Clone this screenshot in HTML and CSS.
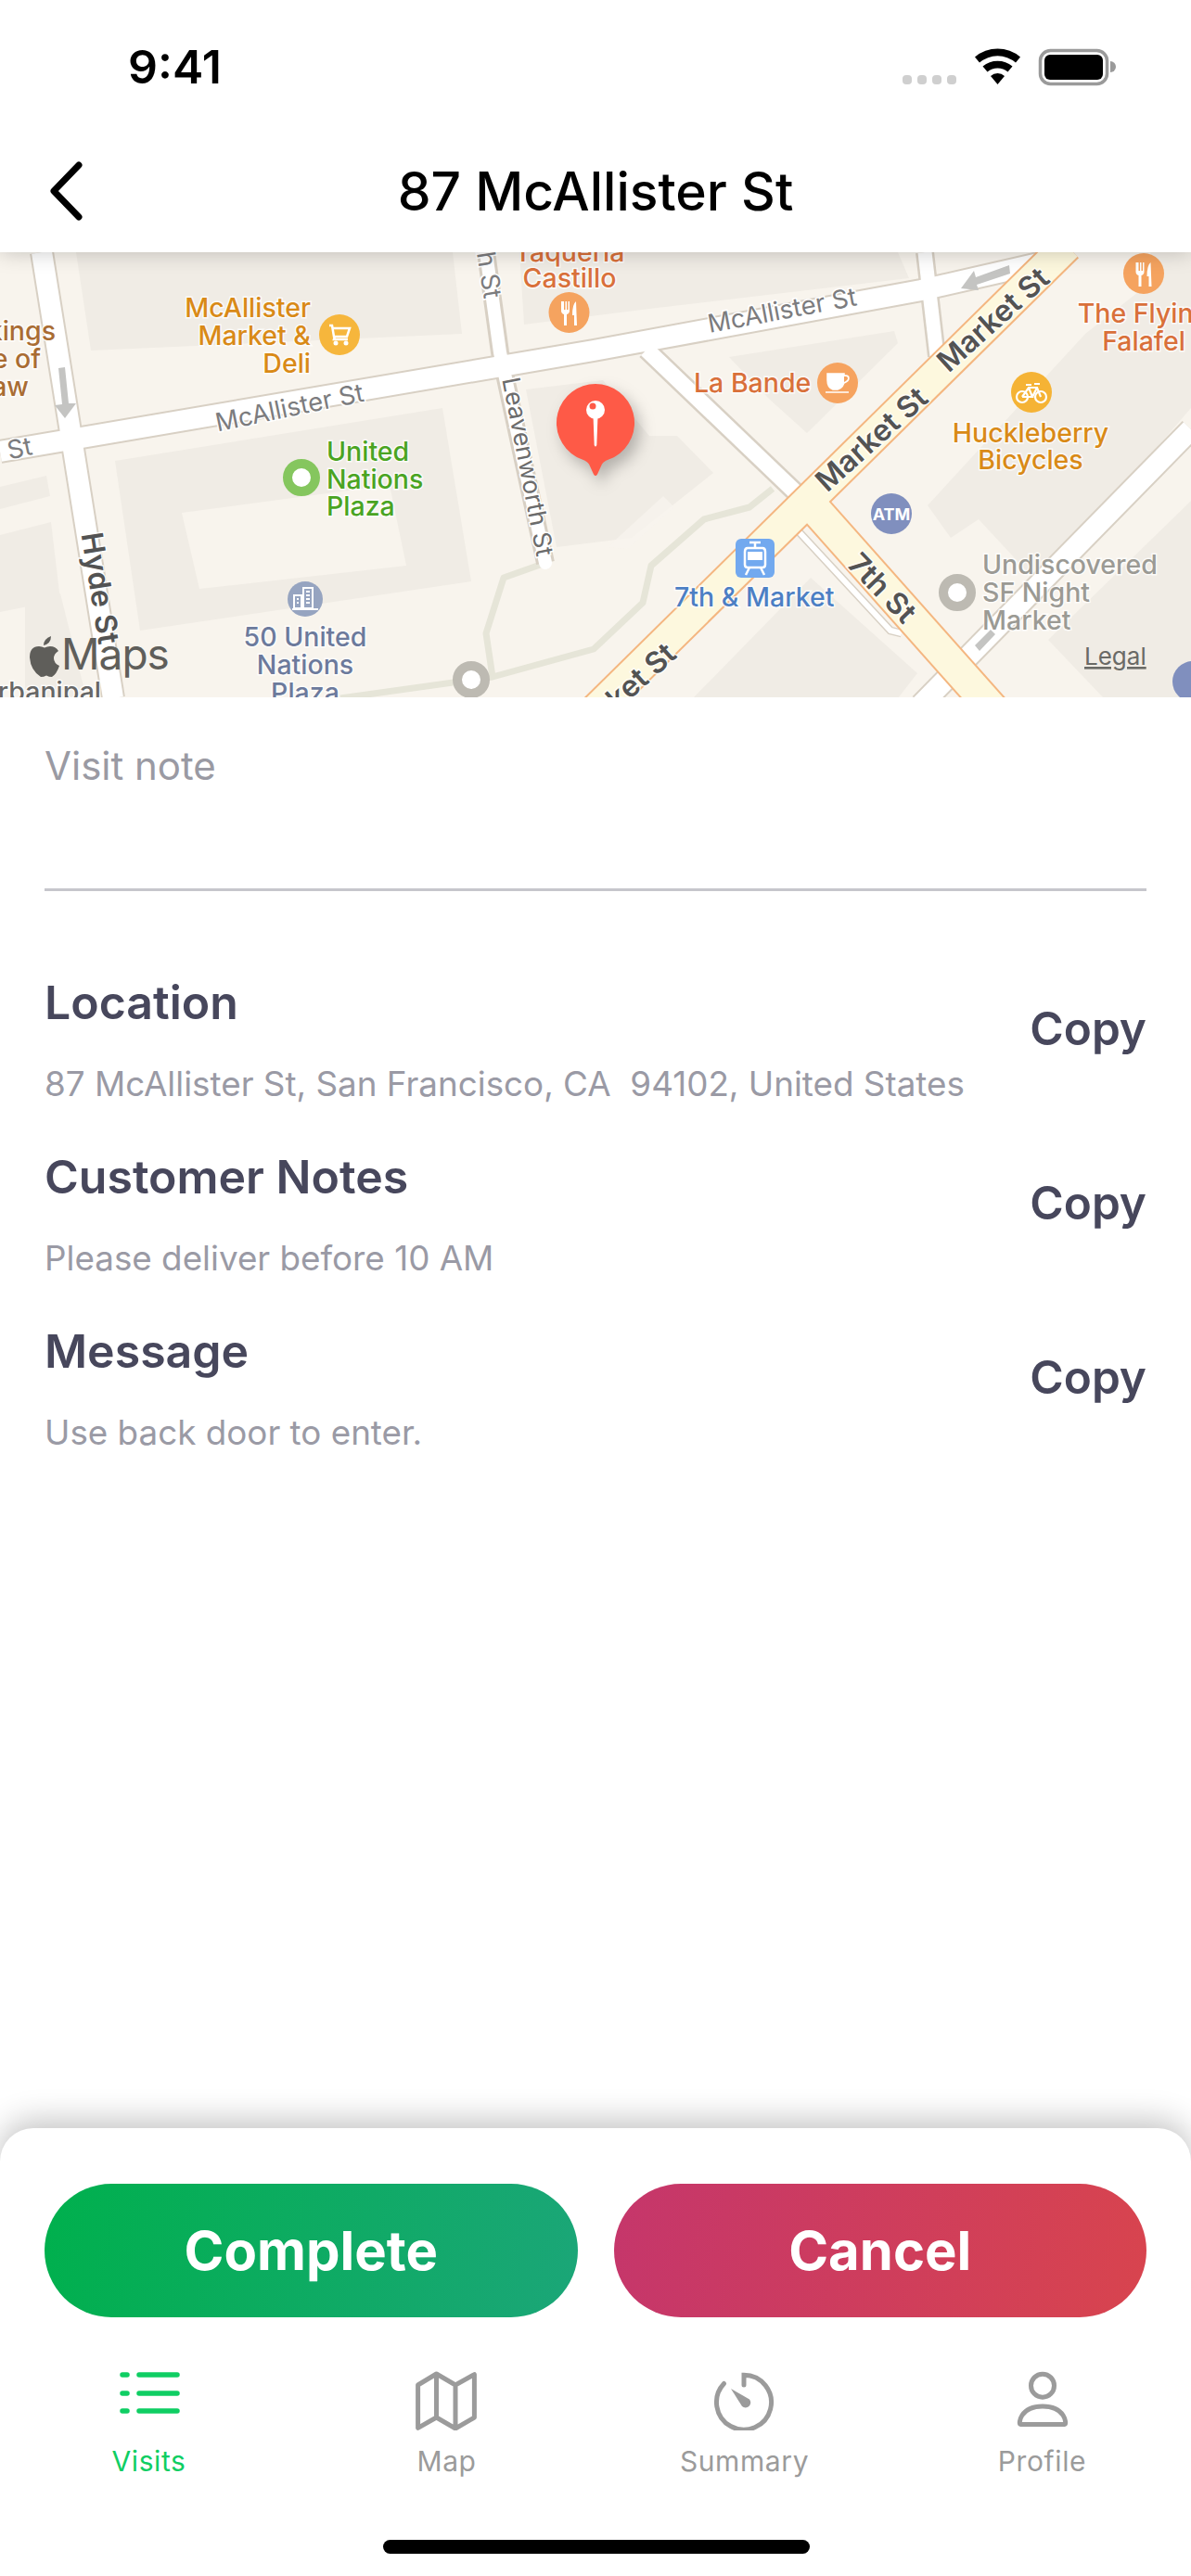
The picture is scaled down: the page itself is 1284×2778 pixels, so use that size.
FILE: index.html
```html
<!DOCTYPE html>
<html lang="en">
<head>
<meta charset="utf-8">
<title>87 McAllister St</title>
<link rel="stylesheet" href="styles.css">
</head>
<body>
<div class="app">
  <header class="top">
    <div class="status">
      <span class="time">9:41</span>
      <svg class="status-icons" width="234" height="44" viewBox="970 50 234 44">
        <g fill="#cfcfcf"><rect x="973" y="81" width="10" height="10" rx="4"/><rect x="989" y="81" width="10" height="10" rx="4"/><rect x="1005" y="81" width="10" height="10" rx="4"/><rect x="1021" y="81" width="10" height="10" rx="4"/></g>
        <g fill="#000"><path d="M1075.5 91l-7.5-9a11 11 0 0 1 15 0z"/><path d="M1064.5 77.500l-5-6a25 25 0 0 1 32 0l-5 6a17 17 0 0 0-22 0z"/><path d="M1056 67.500l-5-6a38 38 0 0 1 49 0l-5 6a30 30 0 0 0-39 0z"/></g>
        <rect x="1121.500" y="54.500" width="72" height="36" rx="11" fill="none" stroke="#9a9a9a" stroke-width="3.500"/>
        <rect x="1126" y="59" width="63" height="27" rx="6" fill="#000"/>
        <path d="M1197 66a6 6 0 0 1 0 12z" fill="#9a9a9a"/>
      </svg>
    </div>
    <div class="nav">
      <svg class="back" width="36" height="64" viewBox="0 0 36 64"><path d="M32 4L5 32l27 28" fill="none" stroke="#000" stroke-width="7" stroke-linecap="round" stroke-linejoin="round"/></svg>
      <h1 class="title">87 McAllister St</h1>
    </div>
  </header>

  <svg class="map" width="1284" height="480" viewBox="0 272 1284 480" xmlns="http://www.w3.org/2000/svg">
    <rect x="0" y="272" width="1284" height="480" fill="#f8f4ed"/>
    <g fill="#f0ece5">
      <path d="M82 272H488l10 88-400 18z"/>
      <path d="M124 497l353-57 31 187-357 53z"/>
      <path d="M0 577l55-14 10 84-65 13zM0 525l50-12 4 22-54 14zM27 640l38 0 30 120H27z"/>
      <path d="M560 272H968l12 28-280 33-135 17z"/>
      <path d="M786 385l178-28 4 13-98 97-41-37z"/>
      <path d="M567 420l83-10 50 60h30l39 40-88 70-81 10z"/>
      <path d="M1000 545L1170 360l114-90v170L1120 630l-65-70-30 20z"/>
      <path d="M1130 690l154-150v213h-94z"/>
      <path d="M747 753l127-130 115 103-21 27z"/>
      <path d="M1240 272h44v40l-30 10z"/>
    </g>
    <path d="M196 553l224-30 18 87-223 25z" fill="#f8f4ed"/>
    <path d="M655 590l60-55 12 12-50 45z" fill="#f8f4ed" opacity=".8"/>

    <g fill="none" stroke="#e6e5d8" stroke-width="7" stroke-linejoin="round">
      <path d="M588 607l-45 16-19 60 7 47M367 753l164-23 109-30 53-50 9-40 57-50 49-13 25-20"/>
    </g>

    <g fill="none" stroke-linecap="butt">
      <g stroke="#d8d0c4" stroke-width="26">
        <path d="M45 272L122 753"/>
        <path d="M0 487L640 378 993 313l140-32"/>
        <path d="M1284 463L993 760"/>
      </g>
      <path d="M524 272L539 380 588 607" stroke="#d8d0c4" stroke-width="20"/>
      <path d="M997 272l13 112" stroke="#d8d0c4" stroke-width="20"/>
      <path d="M697 377L862 535" stroke="#d8d0c4" stroke-width="22"/>
      <g stroke="#ffffff" stroke-width="22">
        <path d="M45 272L122 753"/>
        <path d="M0 487L640 378 993 313l140-32"/>
        <path d="M1284 463L993 760"/>
      </g>
      <path d="M524 272L539 380 588 607" stroke="#fff" stroke-width="14" stroke-linecap="round"/>
      <path d="M997 272l13 112" stroke="#fff" stroke-width="15"/>
      <path d="M697 377L862 535" stroke="#fff" stroke-width="17"/>
      <path d="M858 570L960 680l12 3" stroke="#d8d0c4" stroke-width="9"/>
      <path d="M858 570L960 680l12 3" stroke="#fff" stroke-width="6"/>
      <g stroke="#f4b680" stroke-width="37">
        <path d="M1150 265L640 768"/>
        <path d="M868 537L1075 770"/>
      </g>
      <g stroke="#fdf8de" stroke-width="33">
        <path d="M1150 265L640 768"/>
        <path d="M868 537L1075 770"/>
      </g>
    </g>

    <g fill="#c4c4c2">
      <path d="M63 397l7-1 4 39h8l-12 16-11-14 8-1z"/>
      <path d="M1036 311l14-19 2 7 36-13 1 9-36 12 2 6z"/>
      <path d="M1051 696l17-17 5 5-17 18z"/>
    </g>

    <text class="lbl brown end" x="60" y="367">kings</text>
    <text class="lbl brown end" x="44" y="397">e of</text>
    <text class="lbl brown end" x="31" y="427">aw</text>
    <text class="lbl amber end" x="335" y="342">McAllister</text>
    <text class="lbl amber end" x="335" y="372">Market &amp;</text>
    <text class="lbl amber end" x="335" y="402">Deli</text>
    <text class="lbl orange mid" x="614" y="282">Taqueria</text>
    <text class="lbl orange mid" x="614" y="310">Castillo</text>
    <text class="lbl orange" x="748" y="423">La Bande</text>
    <text class="lbl orange mid" x="1233" y="348">The Flying</text>
    <text class="lbl orange mid" x="1233" y="378">Falafel</text>
    <text class="lbl amber mid" x="1111" y="477">Huckleberry</text>
    <text class="lbl amber mid" x="1111" y="506">Bicycles</text>
    <text class="lbl green" x="352" y="497">United</text>
    <text class="lbl green" x="352" y="527">Nations</text>
    <text class="lbl green" x="352" y="556">Plaza</text>
    <text class="lbl slate mid" x="329" y="697">50 United</text>
    <text class="lbl slate mid" x="329" y="727">Nations</text>
    <text class="lbl slate mid" x="329" y="757">Plaza</text>
    <text class="lbl blue" x="727" y="654">7th &amp; Market</text>
    <text class="lbl stone" x="1059" y="619">Undiscovered</text>
    <text class="lbl stone" x="1059" y="649">SF Night</text>
    <text class="lbl stone" x="1059" y="679">Market</text>
    <text class="lbl dim end" x="109" y="756">rbanipal</text>

    <text class="street mid" transform="translate(314 449) rotate(-11.700)">McAllister St</text>
    <text class="street mid" transform="translate(845 344) rotate(-10.600)">McAllister St</text>
    <text class="street end" transform="translate(36 490) rotate(-11.700)">r St</text>
    <text class="street small mid" transform="translate(560 505) rotate(79)">Leavenworth St</text>
    <text class="street end" transform="translate(522 323) rotate(81)">th St</text>
    <text class="road mid" transform="translate(97 636) rotate(81)">Hyde St</text>
    <text class="road mid" transform="translate(1078 353) rotate(-42)">Market St</text>
    <text class="road mid" transform="translate(947 482) rotate(-42)">Market St</text>
    <text class="road end" transform="translate(731 708) rotate(-42)">Market St</text>
    <text class="road mid" transform="translate(943 642) rotate(46)">7th St</text>

    <ellipse cx="366" cy="361" rx="22" ry="22" fill="#f6b63c"/>
    <path d="M355 351h3l2 12h14l3-9h-18M361 363l-1 3h15" fill="none" stroke="#fff" stroke-width="2.500"/>
    <circle cx="362" cy="370" r="2.500" fill="#fff"/><circle cx="373" cy="370" r="2.500" fill="#fff"/>

    <g>
      <circle cx="613.500" cy="337" r="22" fill="#f5a35f"/>
      <path d="M605 325v10q0 3 3 4v12h3v-12q3-1 3-4v-10h-1.500v9h-1.500v-9h-1.500v9h-1.500v-9zM621 325q-4 3-4 15h2v11h3z" fill="#fff"/>
    </g>
    <g>
      <circle cx="1233" cy="295" r="22" fill="#f5a35f"/>
      <path d="M1224.500 283v10q0 3 3 4v12h3v-12q3-1 3-4v-10h-1.500v9h-1.500v-9h-1.500v9h-1.500v-9zM1240.500 283q-4 3-4 15h2v11h3z" fill="#fff"/>
    </g>
    <circle cx="903" cy="413" r="22" fill="#f6a35f"/>
    <path d="M892 403h18v7q0 8-7 10h-5q-6-2-6-10zM910 405h2q3 0 3 3t-5 5M890 423h25" fill="#fff" stroke="#fff" stroke-width="1.500"/>
    <path d="M910 406h2q2 0 2 2t-4 4" fill="#f6a35f"/>
    <circle cx="1112" cy="423" r="22" fill="#f5b335"/>
    <g fill="none" stroke="#fff" stroke-width="2.200"><circle cx="1102" cy="428" r="6"/><circle cx="1122" cy="428" r="6"/><path d="M1102 428l7-10h9l4 10M1109 418l4 10h-11M1118 418l-5 10M1106 415h6M1115 414h6"/></g>
    <circle cx="961" cy="554" r="22" fill="#808fbe"/>
    <text class="atm mid" x="961" y="561">ATM</text>
    <rect x="793" y="581" width="42" height="42" rx="6" fill="#72a9ef"/>
    <path d="M806 591h16q3 0 3 4v14q0 3-3 3h-16q-3 0-3-3v-14q0-4 3-4zM808 585h12M814 585v6M808 612l-4 8M820 612l4 8" fill="none" stroke="#fff" stroke-width="2.500"/>
    <rect x="806" y="595" width="16" height="9" fill="#fff"/>
    <circle cx="329" cy="646" r="19" fill="#96a4c0"/>
    <path d="M317 656v-14h8v14zM327 656v-22h10v22zM315 657h28" fill="none" stroke="#fff" stroke-width="2"/>
    <path d="M330 638h4M330 642h4M330 646h4M330 650h4M320 646h2M320 650h2" stroke="#fff" stroke-width="2"/>
    <circle cx="325" cy="515" r="15" fill="#fff" stroke="#85c65e" stroke-width="10"/>
    <circle cx="508" cy="733" r="15" fill="#fff" stroke="#bdbab2" stroke-width="10"/>
    <circle cx="1032" cy="639" r="15" fill="#fff" stroke="#bdbab2" stroke-width="10"/>
    <circle cx="1286" cy="735" r="22" fill="#808fbe"/>

    <path d="M32 709q0-12 10-12 3 0 6 1.500 3-1.500 6-1.500 6 0 9 5-5 3-5 8t6 8q-3 9-8 12-3 0-6-1.500-3 1.500-6 1.500-11-7-12-21zM47 696q0-7 8-10 0 8-8 10z" fill="#5f5e5a"/>
    <text class="maps" x="66" y="722">Maps</text>
    <text class="legal" x="1169" y="717">Legal</text>

    <g class="pin">
      <path d="M642 414a42 42 0 0 1 21 78.400c-5 3-10 3-14 8l-5 11q-2 3-4 0l-5-11c-4-5-9-5-14-8A42 42 0 0 1 642 414z" fill="#fe5a47"/>
      <path d="M639.500 448h5l-1.200 32q-1.300 3-2.600 0z" fill="#fff"/>
      <circle cx="642" cy="442" r="10" fill="#fff"/>
      <circle cx="639" cy="438" r="3.500" fill="#fe5a47"/>
    </g>
  </svg>

  <main class="content">
    <div class="note">Visit note</div>
    <section class="rows">
      <div class="row">
        <div class="row-text"><h2 class="row-title">Location</h2><p class="row-sub">87 McAllister St, San Francisco, CA  94102, United States</p></div>
        <span class="copy">Copy</span>
      </div>
      <div class="row">
        <div class="row-text"><h2 class="row-title">Customer Notes</h2><p class="row-sub">Please deliver before 10 AM</p></div>
        <span class="copy">Copy</span>
      </div>
      <div class="row">
        <div class="row-text"><h2 class="row-title">Message</h2><p class="row-sub">Use back door to enter.</p></div>
        <span class="copy">Copy</span>
      </div>
    </section>
  </main>

  <footer class="sheet">
    <div class="actions">
      <button class="btn btn-complete">Complete</button>
      <button class="btn btn-cancel">Cancel</button>
    </div>
    <nav class="tabs">
      <div class="tab tab-active">
        <svg class="tab-icon" width="70" height="64" viewBox="125 2557 70 64"><g stroke="#0fce63" stroke-width="5.500" stroke-linecap="round"><path d="M131 2561h5M131 2581h5M131 2600h5"/><path d="M149 2561h41M149 2581h41M149 2600h41"/></g></svg>
        <span>Visits</span>
      </div>
      <div class="tab">
        <svg class="tab-icon" width="70" height="64" viewBox="446 2557 70 64"><path d="M449.600 2572L469.500 2560 490 2572 510.400 2560.700V2607L490 2619 469.500 2607 449.600 2618.300zM469.500 2560V2607M490 2572V2619" fill="none" stroke="#9b9b9b" stroke-width="5" stroke-linejoin="round"/></svg>
        <span>Map</span>
      </div>
      <div class="tab">
        <svg class="tab-icon" width="70" height="64" viewBox="767 2557 70 64"><path d="M801 2572V2561.200A29.500 29.500 0 1 1 779.500 2570.500" fill="none" stroke="#9b9b9b" stroke-width="5" stroke-linecap="round"/><path d="M787 2576l20 11.500a5.500 5.500 0 0 1-8 7.500z" fill="#9b9b9b"/></svg>
        <span>Summary</span>
      </div>
      <div class="tab">
        <svg class="tab-icon" width="70" height="64" viewBox="1087 2557 70 64"><circle cx="1122" cy="2572.700" r="12.500" fill="none" stroke="#9b9b9b" stroke-width="5"/><path d="M1098 2614.500H1146C1148 2614.500 1147 2595 1122 2595S1096 2614.500 1098 2614.500z" fill="none" stroke="#9b9b9b" stroke-width="5" stroke-linejoin="round"/></svg>
        <span>Profile</span>
      </div>
    </nav>
    <div class="home"></div>
  </footer>
</div>
</body>
</html>
```

FILE: styles.css
```css
* { box-sizing: border-box; }
html, body { margin: 0; padding: 0; background: #fff; }
body { font-family: Inter, "Liberation Sans", sans-serif; }
.app { width: 1284px; height: 2778px; display: flex; flex-direction: column; overflow: hidden; background: #fff; }

.top { position: relative; z-index: 2; height: 272px; background: #fff; box-shadow: 0 0 22px rgba(0, 0, 0, .22); }
.status { height: 110px; padding: 0 80px 0 138px; display: flex; justify-content: space-between; }
.time { font-size: 50px; line-height: 60px; font-weight: 600; color: #000; margin-top: 42px; }
.status-icons { margin-top: 50px; }
.nav { position: relative; height: 162px; display: flex; align-items: center; justify-content: center; padding-top: 32px; }
.back { position: absolute; left: 53px; top: 64px; }
.title { margin: 0; font-size: 57px; line-height: 70px; font-weight: 500; color: #000; }

.map { display: block; flex: none; font-family: Inter, "Liberation Sans", sans-serif; }
.lbl { font-size: 28.500px; font-weight: 500; paint-order: stroke; stroke: rgba(255, 255, 255, .75); stroke-width: 3px; }
.end { text-anchor: end; }
.mid { text-anchor: middle; }
.amber { fill: #d98a17; }
.brown { fill: #a96c33; }
.orange { fill: #d9703a; }
.green { fill: #4aa422; }
.slate { fill: #6c7a9c; }
.blue { fill: #4c7fc4; }
.stone { fill: #9b9a94; }
.dim { fill: #666; }
.street { font-size: 27.500px; fill: #7c7c7e; paint-order: stroke; stroke: #fff; stroke-width: 3px; }
.small { font-size: 26.500px; fill: #6c6c6c; }
.road { font-size: 32px; font-weight: 600; fill: #535353; paint-order: stroke; stroke: rgba(255, 255, 255, .8); stroke-width: 3px; }
.atm { font-size: 18px; font-weight: 700; fill: #fff; }
.maps { font-size: 46px; fill: #5f5e5a; letter-spacing: -1px; }
.legal { font-size: 26px; fill: #6a6a66; text-decoration: underline; }
.pin { filter: drop-shadow(6px 8px 8px rgba(0, 0, 0, .25)); }

.content { flex: 1; padding: 0 48px; }
.note { height: 209px; padding-top: 50px; font-size: 42px; line-height: 48px; color: #9a9aa3; border-bottom: 3px solid #c6c6cc; }
.rows { margin-top: 91px; }
.row { height: 188px; display: flex; justify-content: space-between; align-items: flex-start; }
.row-title { margin: 0; font-size: 50px; line-height: 58px; font-weight: 600; color: #47475c; }
.row-sub { margin: 37px 0 0; font-size: 36.800px; line-height: 44px; color: #9a9aa5; white-space: pre; }
.copy { margin-top: 28px; font-size: 49.500px; line-height: 58px; font-weight: 600; color: #47475c; }

.sheet { position: relative; flex: none; height: 483px; background: #fff; border-radius: 36px 36px 0 0; box-shadow: 0 -8px 34px rgba(0, 0, 0, .24); }
.actions { display: flex; gap: 39px; padding: 60px 48px 0; }
.btn { flex: 1; height: 144px; border: 0; border-radius: 72px; color: #fff; font-family: inherit; font-size: 58px; font-weight: 700; padding: 0; }
.btn-complete { background: linear-gradient(100deg, #00b04d, #1ba678); }
.btn-cancel { background: linear-gradient(100deg, #c5366b, #d8444e); }
.tabs { display: grid; grid-template-columns: repeat(4, 1fr); margin-top: 58px; }
.tab { display: flex; flex-direction: column; align-items: center; font-size: 30px; line-height: 36px; color: #9b9b9b; letter-spacing: .6px; }
.tab-active { color: #0fce63; }
.tab-icon { display: block; margin-bottom: 15px; }
.home { position: absolute; left: 413px; bottom: 24px; width: 460px; height: 15px; border-radius: 8px; background: #000; }
```
